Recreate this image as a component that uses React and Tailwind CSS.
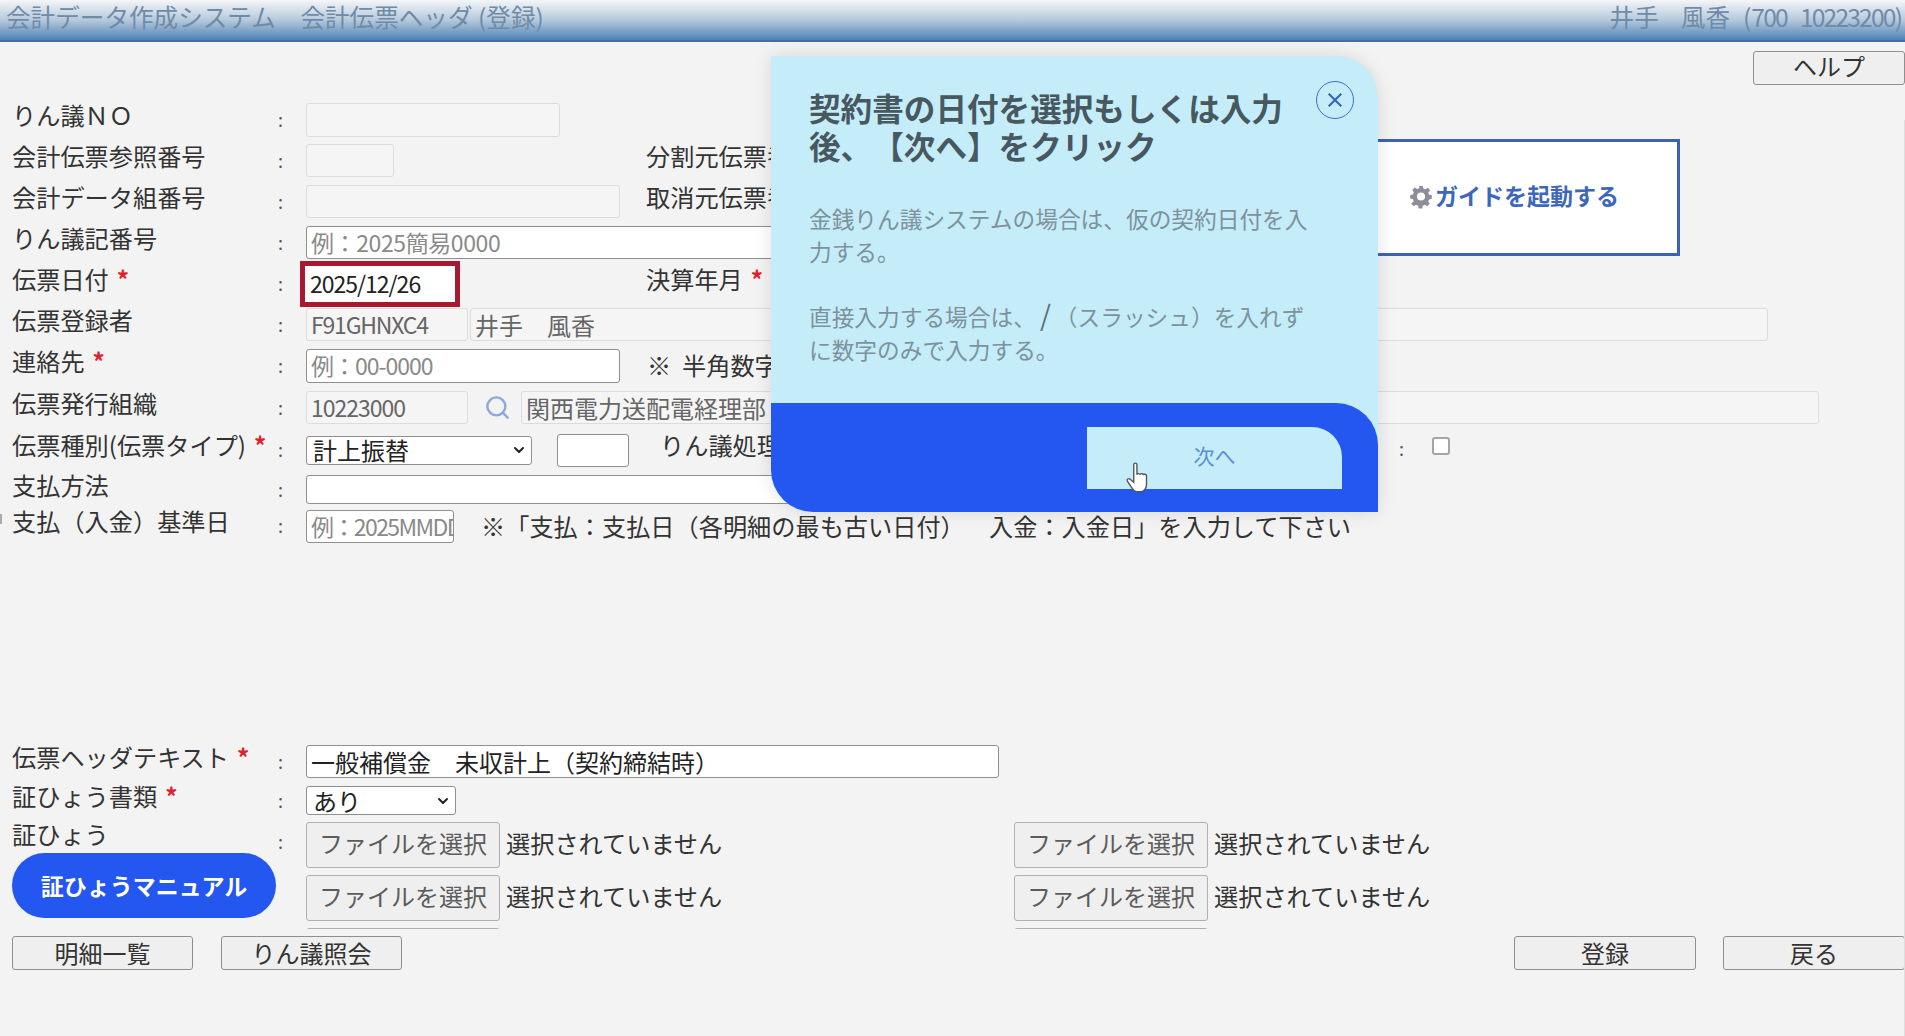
import { ChevronDown, Search } from "lucide-react";

const font = "font-['Noto_Sans_CJK_JP','Noto_Sans',sans-serif] [text-spacing-trim:space-all]";

const Star = () => <span className="text-[#e0212b] ml-2 font-bold">*</span>;

const Colon = ({ className = "" }) => <span className={`text-[#555] text-lg leading-none ${className}`}>:</span>;

// 行: ラベル + コロン + 入力欄
const Row = ({ label, required, className = "h-[41px]", children }) => (
  <div className={`flex items-center ${className}`}>
    <div className="w-[268px] pl-3 text-[24.2px] leading-none text-[#333] whitespace-nowrap -mt-[9px] shrink-0">
      {label}
      {required && <Star />}
    </div>
    <div className="w-[38px] pl-[10px] shrink-0">
      <Colon />
    </div>
    {children}
  </div>
);

const Box = ({ className = "", disabled, dim, latin, children }) => {
  let tone = "bg-white border-[#8f8f8f] text-[#222]";
  if (disabled) tone = "bg-[#f5f5f5] border-[#dcdcdc] text-[#666]";
  if (dim) tone = "bg-white border-[#8f8f8f] text-[#8a8a8a]";
  return (
    <div
      className={`flex items-center px-1 border rounded-[3px] leading-none overflow-hidden whitespace-nowrap shrink-0 ${
        latin ? "text-[23px]" : "text-[24px]"
      } ${tone} ${className}`}
    >
      {children}
    </div>
  );
};

const Select = ({ w, children }) => (
  <div className={`${w} h-[29px] flex items-center justify-between bg-white border border-[#8f8f8f] rounded-[3px] pl-1.5 pr-1 text-[24px] leading-none text-[#222] shrink-0`}>
    {children}
    <ChevronDown size={16} strokeWidth={3} />
  </div>
);

const Btn = ({ w, children }) => (
  <button className={`${w} h-[34px] bg-[#efefef] border border-[#8f8f8f] rounded-[3px] text-[24px] leading-none text-[#333] shrink-0`}>
    {children}
  </button>
);

const FilePick = () => (
  <div className="flex items-center w-[708px] shrink-0">
    <button className="w-[194px] h-[46px] bg-[#efefef] border border-[#b0b0b0] rounded-[3px] text-[24px] leading-none text-[#5c5c5c] pb-1">
      ファイルを選択
    </button>
    <span className="ml-[6px] text-[24.2px] leading-none text-[#333] -mt-1">選択されていません</span>
  </div>
);

export default function App() {
  return (
    <div className={`relative h-[1036px] w-[1905px] overflow-hidden bg-[#f3f3f3] ${font}`}>
      <header className="h-[42px] flex items-center justify-between pl-[6px] pr-[2px] text-[24.6px] leading-none text-[#6f8ba8] bg-gradient-to-b from-[#f4f6f8] via-[#b5c9dc] to-[#4f82b5] border-b-2 border-[#3f6fa3]">
        <span className="-mt-2">会計データ作成システム　会計伝票ヘッダ (登録)</span>
        <div className="-mt-2 flex items-center whitespace-nowrap">
          <span>井手</span>
          <span className="ml-[22px]">風香</span>
          <span className="ml-[13px]">(</span>
          <span className="tracking-[-1.8px]">700</span>
          <span className="ml-[13px] tracking-[-1.8px]">10223200</span>
          <span>)</span>
        </div>
      </header>

      <div className="flex justify-end h-[57px] pt-[9px]">
        <Btn w="w-[152px] pb-1">ヘルプ</Btn>
      </div>

      <div className="h-[41px]">
        <Row label="りん議ＮＯ">
          <Box disabled className="w-[254px] h-[34px]" />
        </Row>
      </div>
      <Row label="会計伝票参照番号">
        <Box disabled className="w-[88px] h-[33px]" />
        <span className="ml-[252px] text-[24.2px] leading-none text-[#333] whitespace-nowrap -mt-[9px]">分割元伝票番号</span>
      </Row>
      <Row label="会計データ組番号">
        <Box disabled className="w-[314px] h-[33px]" />
        <span className="ml-[26px] text-[24.2px] leading-none text-[#333] whitespace-nowrap -mt-[9px]">取消元伝票番号</span>
      </Row>
      <Row label="りん議記番号">
        <Box dim latin className="w-[600px] h-[33px] tracking-[-0.4px]">例：2025簡易0000</Box>
      </Row>
      <Row label="伝票日付" required>
        <div className="ml-[-6px] w-[160px] h-[46px] bg-white border-[5px] border-[#a8182f] flex items-center pl-[5px] text-[23px] leading-none text-[#222] tracking-[-1px] shrink-0">
          2025/12/26
        </div>
        <span className="ml-[186px] text-[24.2px] leading-none text-[#333] whitespace-nowrap -mt-[9px]">
          決算年月
          <Star />
        </span>
      </Row>
      <Row label="伝票登録者">
        <Box disabled latin className="w-[162px] h-[33px] tracking-[-1.2px]">F91GHNXC4</Box>
        <Box disabled className="ml-[2px] w-[1298px] h-[33px]">井手　風香</Box>
      </Row>
      <Row label="連絡先" required>
        <Box dim latin className="w-[314px] h-[34px] tracking-[-1px]">例：00-0000</Box>
        <span className="ml-[27px] text-[24.2px] leading-none text-[#333] whitespace-nowrap">※&nbsp;&nbsp;半角数字</span>
      </Row>
      <Row label="伝票発行組織" className="h-[43px]">
        <Box disabled latin className="w-[162px] h-[33px] tracking-[-1px]">10223000</Box>
        <Search className="ml-[16px] shrink-0 text-[#8fa8d8]" size={27} strokeWidth={2.2} />
        <Box disabled className="ml-[10px] w-[1298px] h-[33px]">関西電力送配電経理部</Box>
      </Row>
      <Row label="伝票種別(伝票タイプ)" required className="h-[42px]">
        <Select w="w-[226px]">計上振替</Select>
        <Box className="ml-[25px] w-[72px] h-[33px]" />
        <span className="ml-[31px] text-[24.2px] leading-none text-[#333] whitespace-nowrap -mt-[9px]">りん議処理</span>
        <Colon className="ml-[618px] -mt-1" />
        <span className="ml-[28px] size-[18px] bg-white border-2 border-[#a5a5a5] rounded-[3px] -mt-2 shrink-0" />
      </Row>
      <Row label="支払方法" className="h-[37px]">
        <Box className="w-[600px] h-[29px]" />
      </Row>
      <Row label="支払（入金）基準日" className="h-[36px]">
        <Box dim latin className="w-[148px] h-[33px] tracking-[-1.6px]">例：2025MMDD</Box>
        <span className="ml-[27px] text-[24.2px] leading-none text-[#333] whitespace-nowrap">
          ※「支払：支払日（各明細の最も古い日付）　入金：入金日」を入力して下さい
        </span>
      </Row>

      <div className="h-[197px]" />

      <Row label="伝票ヘッダテキスト" required>
        <Box className="w-[693px] h-[33px]">一般補償金　未収計上（契約締結時）</Box>
      </Row>
      <Row label="証ひょう書類" required className="h-[37px]">
        <Select w="w-[150px]">あり</Select>
      </Row>

      {/* 証ひょう: スクロール領域 */}
      <div className="flex h-[110px] overflow-hidden">
        <div className="w-[306px] shrink-0 relative">
          <div className="pl-3 pt-[3px] text-[24.2px] leading-none text-[#333]">証ひょう</div>
          <Colon className="absolute left-[278px] top-[13px]" />
          <div className="ml-3 mt-[7px] w-[264px] h-[65px] rounded-full bg-[#2456f0] flex items-center justify-center text-[23px] font-bold text-white">
            証ひょうマニュアル
          </div>
        </div>
        <div className="grid grid-cols-[708px_708px] auto-rows-[46px] gap-y-[7px] pt-[3px]">
          <FilePick />
          <FilePick />
          <FilePick />
          <FilePick />
          <FilePick />
          <FilePick />
        </div>
      </div>

      <div className="flex pt-[7px] pl-3 gap-[28px]">
        <Btn w="w-[181px]">明細一覧</Btn>
        <Btn w="w-[181px]">りん議照会</Btn>
        <div className="ml-auto flex gap-[27px]">
          <Btn w="w-[182px]">登録</Btn>
          <Btn w="w-[182px]">戻る</Btn>
        </div>
      </div>

      {/* 画面端のスクロールバー跡 */}
      <div className="absolute right-0 top-[120px] bottom-0 w-px bg-[#dedede]" />
      <div className="absolute left-0 top-[514px] w-[2px] h-[10px] bg-[#aaa]" />

      {/* ガイド起動ボックス */}
      <div className="absolute left-[1330px] top-[139px] w-[350px] h-[117px] bg-white border-[3px] border-[#3d62b5] flex items-center pl-[76px] text-[23px] font-bold text-[#3d66bd] pb-1">
        <svg viewBox="0 0 24 24" className="size-[24px] mr-[2px] mt-1 shrink-0 text-[#8f8d99]" fill="currentColor">
          <path
            fillRule="evenodd"
            d="M10 1h4l.6 3 2.3 1 2.6-1.700 2.800 2.800L20 8.700l1 2.300 3 .6v4l-3 .6-1 2.300 1.700 2.600-2.800 2.800-2.600-1.700-2.300 1-.6 3h-4l-.6-3-2.300-1-2.600 1.700-2.800-2.800L4 18.200l-1-2.300-3-.6v-4l3-.6 1-2.300L2.300 5.800l2.800-2.800L7.700 4.700 10 3.700z M12 8.500a4.500 4.500 0 1 0 0 9 4.500 4.500 0 0 0 0-9z"
            transform="translate(1.200 -1.200) scale(.9)"
          />
        </svg>
        ガイドを起動する
      </div>

      {/* ポップアップ */}
      <div className="absolute left-[771px] top-[56px] w-[607px] h-[456px] bg-[#c5ecf9] rounded-tr-[42px] rounded-bl-[42px] shadow-[0_0_18px_rgba(0,0,0,0.12)] flex flex-col">
        <div className="flex-1 pl-[38px] pt-[32px] pr-[24px] relative">
          <button className="absolute right-[24px] top-[25px] size-[38px] rounded-full border border-[#3d6fc8] flex items-center justify-center text-[#2f62c4]">
            <svg viewBox="0 0 20 20" className="size-[18px]" stroke="currentColor" strokeWidth="2.2" fill="none">
              <path d="M3 3l14 14M17 3L3 17" />
            </svg>
          </button>
          <h2 className="text-[31.6px] leading-[38px] font-bold text-[#48585f] w-[490px]">
            契約書の日付を選択もしくは入力後、【次へ】をクリック
          </h2>
          <div className="mt-[38px] text-[22.7px] leading-[33px] text-[#7d929c] w-[520px]">
            <p>
              金銭りん議システムの場合は、仮の契約日付を入
              <br />
              力する。
            </p>
            <p className="mt-[32px]">
              直接入力する場合は、<span className="text-[#5c6f78] text-[28px] leading-none mx-1">/</span>（スラッシュ）を入れず
              <br />
              に数字のみで入力する。
            </p>
          </div>
        </div>
        <div className="h-[109px] bg-[#2456f0] rounded-tr-[42px] rounded-bl-[42px] flex justify-end pt-[24px] pr-[36px]">
          <button className="relative w-[255px] h-[62px] bg-[#c5ecf9] rounded-tr-[30px] text-[21px] text-[#5a8fd0] pb-1">
            次へ
            <svg viewBox="0 0 24 32" className="absolute left-[38px] top-[34px] w-[26px] h-[34px]">
              <path
                d="M8 3.500c0-2 3-2 3 0V13c0-1.500 3-1.500 3 0 0-1.500 3-1.500 3 .3 0-1.300 3-1.200 3 .5V22c0 4-2.500 7-6 7h-2c-3 0-4.500-1.500-6-4l-4-6c-1-1.800 1.200-3.200 2.600-1.800L8 20z"
                fill="#fff"
                stroke="#555"
                strokeWidth="1.300"
              />
            </svg>
          </button>
        </div>
      </div>
    </div>
  );
}
